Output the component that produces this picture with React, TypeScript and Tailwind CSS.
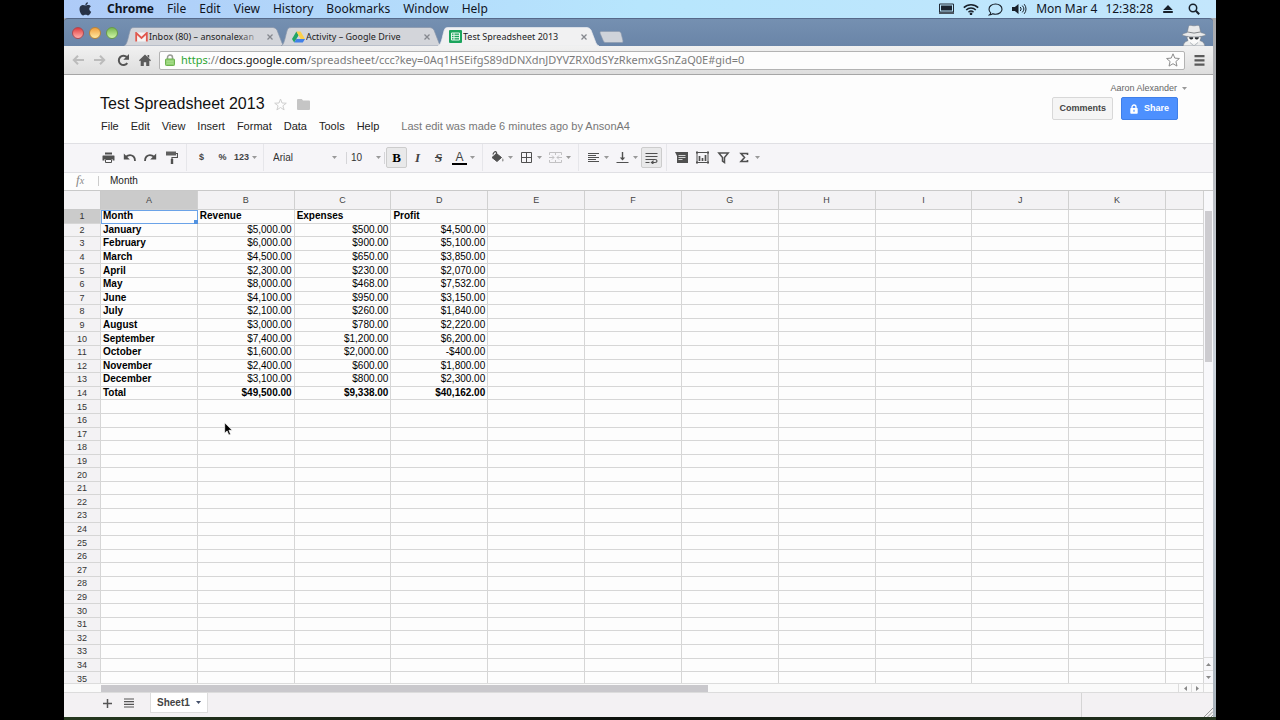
import type { ReactNode } from 'react';

type Row = [string, string, string, string];

const COLUMNS = ['A', 'B', 'C', 'D', 'E', 'F', 'G', 'H', 'I', 'J', 'K'];

const ROWS: Row[] = [
  ['Month', 'Revenue', 'Expenses', 'Profit'],
  ['January', '$5,000.00', '$500.00', '$4,500.00'],
  ['February', '$6,000.00', '$900.00', '$5,100.00'],
  ['March', '$4,500.00', '$650.00', '$3,850.00'],
  ['April', '$2,300.00', '$230.00', '$2,070.00'],
  ['May', '$8,000.00', '$468.00', '$7,532.00'],
  ['June', '$4,100.00', '$950.00', '$3,150.00'],
  ['July', '$2,100.00', '$260.00', '$1,840.00'],
  ['August', '$3,000.00', '$780.00', '$2,220.00'],
  ['September', '$7,400.00', '$1,200.00', '$6,200.00'],
  ['October', '$1,600.00', '$2,000.00', '-$400.00'],
  ['November', '$2,400.00', '$600.00', '$1,800.00'],
  ['December', '$3,100.00', '$800.00', '$2,300.00'],
  ['Total', '$49,500.00', '$9,338.00', '$40,162.00'],
];

const ROW_COUNT = 35;
const MAC_MENUS = ['File', 'Edit', 'View', 'History', 'Bookmarks', 'Window', 'Help'];
const DOC_MENUS = ['File', 'Edit', 'View', 'Insert', 'Format', 'Data', 'Tools', 'Help'];

function Caret({ className = 'text-[#999]' }: { className?: string }) {
  return (
    <svg viewBox="0 0 5 3" className={`h-[3px] w-[5px] shrink-0 ${className}`} fill="currentColor">
      <path d="M0 0h5L2.5 3z" />
    </svg>
  );
}

function MacMenuBar() {
  return (
    <header className="flex h-[18px] shrink-0 items-center bg-gradient-to-r from-[#aecbf8] via-[#b7e6fd] to-[#c3e6fc] pr-4 pl-[15px] font-['Noto_Sans',sans-serif] text-xs leading-4 text-[#10151f]">
      <svg viewBox="0 0 13 14" className="mr-[15px] h-[14px] w-[13px]" fill="#273246">
        <path d="M6.4 3.6c-.8 0-1.7-.6-2.8-.5C1.700 3.300.5 4.800.5 7c0 2.900 1.900 6.400 3.600 6.400.9 0 1.300-.6 2.500-.6s1.500.6 2.400.6c1.500 0 2.700-2.300 3.200-3.700-1.300-.6-1.900-1.500-1.900-2.700 0-1.100.6-2 1.600-2.600-.7-.9-1.600-1.400-2.700-1.400-1.200 0-2 .6-2.800.6zM8.900.3C7.300.5 6.200 1.800 6.300 3.200 7.800 3.200 9 1.900 8.900.3z" />
      </svg>
      <button className="mr-[13px] font-bold">Chrome</button>
      <nav className="flex gap-[13px]">
        {MAC_MENUS.map(m => <button key={m}>{m}</button>)}
      </nav>
      <div className="ml-auto flex items-center gap-[9px]">
        <svg viewBox="0 0 15 12" className="h-3 w-[15px]">
          <path d="M.5 1h14v8H.5z" fill="none" stroke="#222c38" />
          <path d="M2 2.500h11v5H2z" fill="#1b2430" />
          <path d="M0 9h15v2H0z" fill="#4a5560" />
        </svg>
        <svg viewBox="0 0 16 12" className="h-3 w-4" fill="none" stroke="#18202a" strokeWidth="1.5">
          <path d="M.8 4.600a10.300 10.300 0 0 1 14.400 0M3.200 7a6.800 6.800 0 0 1 9.600 0M5.500 9.200a3.600 3.600 0 0 1 5 0" />
          <circle cx="8" cy="10.800" r=".6" />
        </svg>
        <svg viewBox="0 0 15 13" className="h-[13px] w-[15px]" fill="none" stroke="#18202a" strokeWidth="1.100">
          <path d="M2.700 9.800C1.600 8.800 1 7.600 1 6.200 1 3.300 3.900 1 7.600 1S14 3.300 14 6.200s-2.900 5-6.400 5c-1 0-1.900-.1-2.700-.5-.8.8-2.200 1.300-3.600 1.300 1-.6 1.400-1.400 1.400-2.200z" />
        </svg>
        <svg viewBox="0 0 15 12" className="h-3 w-[15px]">
          <path d="M0 4h2.800L6.500 1v10L2.800 8H0z" fill="#18202a" />
          <path d="M8.300 4a3 3 0 0 1 0 4M10.300 2.600a5 5 0 0 1 0 6.800M12.200 1.200a7.300 7.300 0 0 1 0 9.600" fill="none" stroke="#18202a" />
        </svg>
        <span className="flex gap-2 whitespace-nowrap"><span>Mon Mar 4</span><span>12:38:28</span></span>
        <svg viewBox="0 0 10 8" className="ml-[1px] h-2 w-[10px]" fill="#18202a">
          <path d="M5 0l4.800 5H.2zM.2 6h9.600v2H.2z" />
        </svg>
        <button aria-label="Spotlight" className="ml-[6px]">
          <svg viewBox="0 0 12 12" className="h-3 w-3" fill="none" stroke="#18202a" strokeWidth="1.500">
            <circle cx="5" cy="5" r="3.700" />
            <path d="M7.800 7.800l3.400 3.400" strokeWidth="2" />
          </svg>
        </button>
      </div>
    </header>
  );
}

function BrowserTab({ title, icon, active, fade }: { title: string; icon: ReactNode; active?: boolean; fade?: boolean }) {
  return (
    <div role="tab" aria-selected={!!active} className={`relative -mr-1 flex h-[19px] w-[161px] items-center pr-3 pl-[11px] ${active ? 'z-10' : ''}`}>
      <svg viewBox="0 0 161 19" preserveAspectRatio="none" className="absolute inset-0 h-full w-full">
        <path
          d="M0 19C4 18 5 4 7 1.500Q8 .5 10 .5H149Q151.500.5 153 3L158 16Q159 18.500 161 19z"
          fill={active ? '#f1f1f2' : '#d3d5da'}
          stroke={active ? '#e9ebef' : '#8795ab'}
          strokeWidth=".7"
        />
      </svg>
      <span className="relative flex shrink-0">{icon}</span>
      <span className="relative ml-px flex-1 overflow-hidden whitespace-nowrap text-[9px] leading-3 text-[#1c1c1c]">
        {title}
        {fade && <span className="absolute inset-y-0 right-0 w-6 bg-gradient-to-r from-transparent to-[#d3d5da]" />}
      </span>
      <button aria-label={`Close ${title}`} className="relative ml-[5px]">
        <svg viewBox="0 0 6 6" className="h-[6px] w-[6px]" stroke="#85888e" strokeWidth="1.300">
          <path d="M.5.5l5 5M5.500.5l-5 5" />
        </svg>
      </button>
    </div>
  );
}

function GmailIcon() {
  return (
    <svg viewBox="0 0 13 10" className="h-[10px] w-[13px]">
      <path d="M1 .5h11v9H1z" fill="#f6f3f2" />
      <path d="M1.200 9.500V1l5.300 5 5.300-5v8.500" fill="none" stroke="#e0584e" strokeWidth="1.800" />
    </svg>
  );
}

function DriveIcon() {
  return (
    <svg viewBox="0 0 13 12" className="h-3 w-[13px]">
      <path d="M4.400.5L0 8l2.200 3.500 4.400-7.300z" fill="#23a566" />
      <path d="M4.400.5h4.200L13 8H8.700z" fill="#fcd04a" />
      <path d="M4.400 8H13l-2.200 3.500H2.200z" fill="#4180e8" />
    </svg>
  );
}

function SheetsIcon() {
  return (
    <svg viewBox="0 0 13 13" className="h-[13px] w-[13px]">
      <rect width="13" height="13" rx="1" fill="#1ba45c" />
      <path d="M2.500 3h8v7h-8zM2.500 5.300h8M2.500 7.700h8M5 3v7" fill="none" stroke="#e8f8ee" />
    </svg>
  );
}

function TabStrip() {
  return (
    <div className="flex h-7 shrink-0 items-end rounded-t border-t border-[#56698a] bg-gradient-to-b from-[#7590b1] to-[#6a85a8] font-['Noto_Sans',sans-serif]">
      <div className="mr-1 flex gap-[5px] self-center pl-2">
        <span className="h-3 w-3 rounded-full border border-[#a94a52] bg-gradient-to-b from-[#dd3640] to-[#ffaeac]" />
        <span className="h-3 w-3 rounded-full border border-[#b98338] bg-gradient-to-b from-[#f0a03a] to-[#ffe9a0]" />
        <span className="h-3 w-3 rounded-full border border-[#689a48] bg-gradient-to-b from-[#78b850] to-[#d0f6a6]" />
      </div>
      <div role="tablist" className="ml-[2px] flex">
        <BrowserTab title="Inbox (80) – ansonalexan" icon={<GmailIcon />} fade />
        <BrowserTab title="Activity – Google Drive" icon={<DriveIcon />} />
        <BrowserTab title="Test Spreadsheet 2013" icon={<SheetsIcon />} active />
      </div>
      <button aria-label="New tab" className="mb-[3px] ml-1">
        <svg viewBox="0 0 25 12" className="h-3 w-[25px]">
          <path d="M2 .5h18q1.500 0 2 1.500l2 8q.3 1.500-1.200 1.500H6.500Q5 11.500 4.400 10L1 2Q.6.5 2 .5z" fill="#cfd3da" stroke="#8b98ac" strokeWidth=".6" />
        </svg>
      </button>
      <svg viewBox="0 0 26 22" className="mr-[6px] ml-auto h-[22px] w-[26px]">
        <path d="M2 22q.5-4.500 5-5.500L5.500 13h15l-1.500 3.500q4.500 1 5 5.500z" fill="#eceded" stroke="#66717f" strokeWidth=".6" />
        <path d="M7.500 11.500h11v4.500q-1.500 3.500-5.500 3.500T7.500 16z" fill="#fafafa" />
        <path d="M7.500 2.500q1-1.700 3-1 2.500.7 5 0 2-.7 3 1l1.200 6Q24 9.300 25 11q-3 1.800-12 1.800T1 11q1-1.700 5.300-2.500z" fill="#e9eaeb" stroke="#717982" strokeWidth=".5" />
        <path d="M6.800 8q6.200 2.200 12.400 0" fill="none" stroke="#85888c" />
        <path d="M8 13.200h4.200v1.200q-1 1.300-2.400 1-1.600-.3-1.800-2.200zm5.800 0H18q-.2 1.900-1.800 2.200-1.400.3-2.400-1z" fill="#292d33" />
        <path d="M9 18.500l4 3.500 4-3.500" fill="none" stroke="#b1b6bb" />
      </svg>
    </div>
  );
}

function AddressBar() {
  return (
    <div className="flex h-[29px] shrink-0 items-center border-b border-[#a6a6a6] bg-gradient-to-b from-[#f1f1f1] to-[#dedede] pr-2 pl-2">
      <button aria-label="Back" className="mr-[10px]">
        <svg viewBox="0 0 12 10" className="h-[10px] w-3" fill="none" stroke="#bcbcbc" strokeWidth="2"><path d="M12 5H1.500M6 .8L1.800 5 6 9.200" /></svg>
      </button>
      <button aria-label="Forward" className="mr-[11px]">
        <svg viewBox="0 0 12 10" className="h-[10px] w-3" fill="none" stroke="#bcbcbc" strokeWidth="2"><path d="M0 5h10.500M6 .8L10.200 5 6 9.200" /></svg>
      </button>
      <button aria-label="Reload" className="mr-[9px]">
        <svg viewBox="0 0 13 13" className="h-[13px] w-[13px]">
          <path d="M10.300 9.200A4.700 4.700 0 1 1 9.800 3" fill="none" stroke="#555" strokeWidth="2" />
          <path d="M12 0v5.800H6.300z" fill="#555" />
        </svg>
      </button>
      <button aria-label="Home" className="mr-2">
        <svg viewBox="0 0 12 12" className="h-3 w-3" fill="#5b5b5b">
          <path d="M6 .5l6 5.800-.9.900L10.300 6.500V12H7.200V8.200H4.800V12H1.700V6.500l-.8.700L0 6.300zM8.500 1h1.700v3L8.500 2.400z" />
        </svg>
      </button>
      <div className="flex h-[19px] min-w-0 flex-1 items-center rounded-xs border border-[#b3b3b3] bg-[#fdfdfd] pr-1 pl-[5px]">
        <svg viewBox="0 0 10 12" className="mr-[6px] h-3 w-[10px] shrink-0">
          <path d="M2.500 6V3.500a2.500 2.500 0 0 1 5 0V6" fill="none" stroke="#989c94" strokeWidth="1.500" />
          <rect x=".5" y="5" width="9" height="6.500" rx=".8" fill="#8fd070" stroke="#6db150" />
          <path d="M1.500 7.200h7M1.500 9.200h7" stroke="#b5e39c" strokeWidth=".8" />
        </svg>
        <div
          role="textbox"
          aria-label="Address"
          contentEditable
          suppressContentEditableWarning
          className="min-w-0 flex-1 overflow-hidden font-['Noto_Sans',sans-serif] text-[11px] leading-4 whitespace-nowrap text-[#7b7b7b]"
        >
          <span className="text-[#2da531]">https</span>://<span className="text-[#141414]">docs.google.com</span>/spreadsheet/ccc?key=0Aq1HSEifgS89dDNXdnJDYVZRX0dSYzRkemxGSnZaQ0E#gid=0
        </div>
        <button aria-label="Bookmark">
          <svg viewBox="0 0 14 14" className="h-[14px] w-[14px]" fill="none" stroke="#8c8c8c" strokeLinejoin="round">
            <path d="M7 .8l1.800 4.300 4.600.4-3.500 3 1.100 4.600L7 10.700l-4 2.400 1.100-4.600-3.500-3 4.600-.4z" />
          </svg>
        </button>
      </div>
      <button aria-label="Chrome menu" className="ml-[9px]">
        <svg viewBox="0 0 11 11" className="h-[11px] w-[11px]" fill="#5a5a5a"><path d="M.5 0h10v2.200H.5zM.5 4.300h10v2.200H.5zM.5 8.600h10v2.200H.5z" /></svg>
      </button>
    </div>
  );
}

function DocHeader() {
  return (
    <div className="flex h-[68px] shrink-0 justify-between bg-[#fdfdfd] pl-9">
      <div className="pt-[19px]">
        <div className="flex items-center">
          <h1 className="text-base leading-5 text-[#111]">Test Spreadsheet 2013</h1>
          <button aria-label="Star" className="ml-[9px]">
            <svg viewBox="0 0 13 13" className="h-[13px] w-[13px]" fill="none" stroke="#cfcfcf" strokeLinejoin="round">
              <path d="M6.500 1l1.500 4 4.300.2-3.400 2.600 1.200 4.100-3.600-2.400-3.600 2.400 1.200-4.100L.7 5.200 5 5z" />
            </svg>
          </button>
          <button aria-label="Move to folder" className="ml-[10px]">
            <svg viewBox="0 0 13 11" className="h-[11px] w-[13px]" fill="#c5c5c5"><path d="M0 1q0-1 1-1h3.800l1.200 1.500h6q1 0 1 1V10q0 1-1 1H1q-1 0-1-1z" /></svg>
          </button>
        </div>
        <div className="mt-1 flex items-center gap-3 pl-px text-[11px] leading-4 text-[#222]">
          {DOC_MENUS.map(m => <button key={m}>{m}</button>)}
          <span className="ml-[10px] text-[#777]">Last edit was made 6 minutes ago by AnsonA4</span>
        </div>
      </div>
      <div className="flex flex-col items-end pt-[7px] pr-[26px]">
        <button className="flex items-center gap-[5px] text-[9px] leading-3 text-[#666]">Aaron Alexander <Caret /></button>
        <div className="mt-[3px] mr-[9px] flex gap-2 text-[9px] font-bold">
          <button className="h-[23px] rounded-xs border border-[#d8d8d8] bg-[#f5f5f5] px-[6px] text-[#444]">Comments</button>
          <button className="flex h-[23px] items-center gap-[6px] rounded-xs border border-[#3f7fe8] bg-[#4d90fe] px-2 text-white">
            <svg viewBox="0 0 8 10" className="h-[10px] w-2">
              <path d="M2 5V3a2 2 0 0 1 4 0v2" fill="none" stroke="#fff" strokeWidth="1.300" />
              <rect x=".3" y="4" width="7.400" height="5.700" rx=".7" fill="#fff" />
              <path d="M4 5.800v2" stroke="#4d90fe" strokeWidth="1.200" />
            </svg>
            Share
          </button>
        </div>
      </div>
    </div>
  );
}

interface ToolProps {
  label: string;
  children: ReactNode;
  pressed?: boolean;
  menu?: boolean;
}

function Tool({ label, children, pressed, menu }: ToolProps) {
  return (
    <button
      aria-label={label}
      className={`flex h-[21px] shrink-0 items-center rounded-xs text-[9px] font-bold text-[#444] ${menu ? 'w-[29px] gap-1 pl-1' : 'w-[21px] justify-center'} ${pressed ? 'border border-[#ccc] bg-[#e9e9ea]' : ''}`}
    >
      {children}
      {menu && <Caret />}
    </button>
  );
}

function Glyph({ children, faded }: { children: ReactNode; faded?: boolean }) {
  return (
    <svg viewBox="0 0 13 13" className={`h-[13px] w-[13px] shrink-0 ${faded ? 'opacity-30' : ''}`} fill="none" stroke="#505050">
      {children}
    </svg>
  );
}

function Divider() {
  return <div className="mx-1 h-full w-px shrink-0 bg-[#e6e6ea]" />;
}

function Toolbar() {
  return (
    <div role="toolbar" className="flex h-[30px] shrink-0 items-center border-y border-[#e0e0e4] bg-[#f6f5f8] pb-px pl-[34px]">
      <Tool label="Print">
        <Glyph>
          <path d="M3 1.500h7v2H3zM1 4.500h11q.5 0 .5.500v4.500H10.500V8h-8v1.500H.5V5q0-.5.500-.5z" fill="#505050" stroke="none" />
          <path d="M3.500 8.500h6v3h-6z" />
        </Glyph>
      </Tool>
      <Tool label="Undo">
        <Glyph><path d="M2.500 6Q7 2.500 10.500 5.500 12 7 12 10" strokeWidth="1.800" /><path d="M.8 2.500v6h6z" fill="#505050" stroke="none" /></Glyph>
      </Tool>
      <Tool label="Redo">
        <Glyph><path d="M10.500 6Q6 2.500 2.500 5.500 1 7 1 10" strokeWidth="1.800" /><path d="M12.200 2.500v6h-6z" fill="#505050" stroke="none" /></Glyph>
      </Tool>
      <Tool label="Paint format">
        <Glyph><path d="M1 .5h10v4H1z" fill="#606060" stroke="none" /><path d="M11 2.500h1.500v4H7V8" strokeWidth="1.200" /><path d="M7 8v5" strokeWidth="2.400" /></Glyph>
      </Tool>
      <Divider />
      <Tool label="Currency">$</Tool>
      <Tool label="Percent">%</Tool>
      <button className="flex h-[21px] w-[26px] shrink-0 items-center gap-[3px] pl-px text-[9px] font-bold text-[#444]">123 <Caret /></button>
      <Divider />
      <div className="relative flex w-[75px] shrink-0 items-center">
        <select aria-label="Font" className="w-full appearance-none bg-transparent pl-[5px] text-[10px] leading-4 text-[#333]"><option>Arial</option></select>
        <span className="pointer-events-none absolute right-[6px]"><Caret /></span>
      </div>
      <div className="mx-[3px] h-3 w-px shrink-0 bg-[#d5d5d8]" />
      <div className="relative flex w-[34px] shrink-0 items-center">
        <select aria-label="Font size" className="w-full appearance-none bg-transparent pl-px text-[10px] leading-4 text-[#333]"><option>10</option></select>
        <span className="pointer-events-none absolute right-[3px]"><Caret /></span>
      </div>
      <div className="mr-px h-3 w-px shrink-0 bg-[#d5d5d8]" />
      <Tool label="Bold" pressed><span className="font-['Liberation_Serif',serif] text-[13px] text-black">B</span></Tool>
      <Tool label="Italic"><span className="font-['Liberation_Serif',serif] text-[13px] italic">I</span></Tool>
      <Tool label="Strikethrough"><span className="font-['Liberation_Serif',serif] text-[13px] italic line-through">S</span></Tool>
      <Tool label="Text color" menu>
        <span className="-mx-px flex w-[15px] shrink-0 flex-col items-center border-b-2 border-black text-[12px] leading-3 font-normal">A</span>
      </Tool>
      <Divider />
      <Tool label="Fill color" menu>
        <Glyph><path d="M5.500 2.500l5 4-4.500 4L1 6.500z" fill="#505050" /><path d="M1.800 3.500Q4-1 5.500 1.500v3" strokeWidth="1.200" /><path d="M11.800 7q1.700 2.500 0 3.800-1.700-1.300 0-3.800z" fill="#999" stroke="none" /></Glyph>
      </Tool>
      <Tool label="Borders" menu><Glyph><path d="M1.500 1.500h10v10h-10zM6.500 1.500v10M1.500 6.500h10" /></Glyph></Tool>
      <Tool label="Merge cells" menu>
        <Glyph faded><path d="M.5 4V1.500h12V4M.5 9v2.500h12V9M6.500 1.500V4M6.500 9v2.500M0 6.500h5M3 4.500l2 2-2 2M13 6.500H8M10 4.500l-2 2 2 2" /></Glyph>
      </Tool>
      <Divider />
      <Tool label="Horizontal align" menu><Glyph><path d="M1 2.500h11M1 4.500h8M1 6.500h11M1 8.500h8M1 10.500h11" /></Glyph></Tool>
      <Tool label="Vertical align" menu><Glyph><path d="M6.500 1v7" strokeWidth="1.400" /><path d="M3.800 6.500h5.400L6.500 9.500z" fill="#505050" stroke="none" /><path d="M.5 11.500h12" /></Glyph></Tool>
      <Tool label="Wrap text" pressed>
        <Glyph><path d="M.5 2.500h12M.5 5.500h12M.5 8.500h9.500q2 0 2 1.500t-2 1.500H7M.5 11.500h4" strokeWidth="1.200" /><path d="M8.500 9v4.800L5.500 11.500z" fill="#505050" stroke="none" /></Glyph>
      </Tool>
      <Divider />
      <Tool label="Insert comment">
        <Glyph><path d="M0 1h13v11H2V5z" fill="#505050" stroke="none" /><path d="M3.500 4.500h7M3.500 6.500h7M3.500 8.500h4" stroke="#d5d5d5" /></Glyph>
      </Tool>
      <Tool label="Insert chart">
        <Glyph><path d="M1 1.500h11v10H1z" /><path d="M3.500 5v5M6.500 7v3M9.500 4v6" strokeWidth="1.700" /><path d="M0 .5h2v2H0zM11 .5h2v2h-2zM0 10.500h2v2H0zM11 10.500h2v2h-2z" fill="#505050" stroke="none" /></Glyph>
      </Tool>
      <Tool label="Filter"><Glyph><path d="M1.800 2h9.400L7.500 6.500v5l-2-1.500V6.500z" strokeWidth="1.500" /></Glyph></Tool>
      <Tool label="Functions" menu><Glyph><path d="M9.500 4V2.500H3l3.500 4L3 10.500h6.500V9" strokeWidth="1.600" /></Glyph></Tool>
    </div>
  );
}

function FormulaBar() {
  return (
    <div className="flex h-[17px] shrink-0 items-center bg-[#fdfdfd] pb-[2px] pl-3">
      <span className="w-[22px] font-['Liberation_Serif',serif] text-[13px] leading-4 text-[#888] italic">f<span className="text-[10px]">x</span></span>
      <div className="h-[10px] border-l border-[#ccc]" />
      <input aria-label="Formula" defaultValue="Month" className="min-w-0 flex-1 bg-transparent pl-[11px] text-[10px] leading-4 text-[#222] outline-none" />
    </div>
  );
}

function Cell({ row, col }: { row: number; col: number }) {
  const text = ROWS[row]?.[col] ?? '';
  const bold = row === 0 || col === 0 || row === ROWS.length - 1;
  const selected = row === 0 && col === 0;
  return (
    <td
      className={`border-r border-b border-[#d6d6d6] px-[2px] py-0 text-black ${bold ? 'font-bold' : ''} ${row > 0 && col > 0 ? 'text-right' : ''} ${selected ? 'relative outline -outline-offset-1 outline-[#6ba3e8]' : 'overflow-hidden'}`}
    >
      {text}
      {selected && <span className="absolute -right-px -bottom-px h-1 w-1 bg-[#5292e0]" />}
    </td>
  );
}

function Grid() {
  return (
    <div className="flex min-h-0 flex-1 border-t border-[#c9c9c9]">
      <div className="min-w-0 flex-1 overflow-hidden bg-[#fdfdfd]">
        <table className="h-[495px] w-full table-fixed border-separate border-spacing-0 text-[10px] leading-3">
          <colgroup>
            <col className="w-[37px]" />
            {COLUMNS.map(c => <col key={c} />)}
            <col className="w-[38px]" />
          </colgroup>
          <thead>
            <tr className="h-[19px] bg-[#f3f2f4] text-[9px] text-[#444]">
              <th className="border-r border-b border-[#c9c9c9]" />
              {COLUMNS.map(c => (
                <th key={c} className={`border-r border-b border-[#d0d0d0] p-0 font-normal ${c === 'A' ? 'bg-[#cbcbcb]' : ''}`}>{c}</th>
              ))}
              <th className="border-r border-b border-[#d0d0d0]" />
            </tr>
          </thead>
          <tbody>
            {Array.from({ length: ROW_COUNT }, (_, row) => (
              <tr key={row}>
                <th className={`border-r border-b border-[#d6d6d6] p-0 text-[9px] font-normal text-[#333] ${row === 0 ? 'bg-[#cbcbcb]' : 'bg-[#f3f2f4]'}`}>{row + 1}</th>
                {COLUMNS.map((c, col) => <Cell key={c} row={row} col={col} />)}
                <td className="border-r border-b border-[#d6d6d6] p-0" />
              </tr>
            ))}
          </tbody>
        </table>
      </div>
      <div className="flex w-[9px] shrink-0 flex-col bg-[#f8f8fb] pt-[20px]">
        <div className="ml-px h-[32%] w-[7px] bg-[#cdccd0]" />
        <button aria-label="Scroll up" className="mt-auto flex h-[13px] items-center justify-center border-t border-[#ddd] text-[#888]">
          <Caret className="rotate-180" />
        </button>
        <button aria-label="Scroll down" className="flex h-[13px] items-center justify-center border-t border-[#ddd] text-[#888]">
          <Caret className="" />
        </button>
      </div>
    </div>
  );
}

function HorizontalScroll() {
  return (
    <div className="flex h-[10px] shrink-0 items-center border-y border-[#dcdcdc] bg-[#fafafa] pr-[9px] pl-[37px]">
      <div className="h-[7px] w-[55%] bg-[#c9c8cc]" />
      <button aria-label="Scroll left" className="ml-auto flex h-full w-[13px] items-center justify-center border-l border-[#ddd] text-[#888]">
        <Caret className="rotate-90" />
      </button>
      <button aria-label="Scroll right" className="flex h-full w-[13px] items-center justify-center border-x border-[#ddd] text-[#888]">
        <Caret className="-rotate-90" />
      </button>
    </div>
  );
}

function SheetBar() {
  return (
    <footer className="flex h-6 shrink-0 bg-[#f3f1f3] pl-[39px]">
      <div className="mr-4 flex items-center gap-3 pb-1">
        <button aria-label="Add sheet">
          <svg viewBox="0 0 9 9" className="h-[9px] w-[9px]" stroke="#555" strokeWidth="1.500"><path d="M4.500 0v9M0 4.500h9" /></svg>
        </button>
        <button aria-label="All sheets">
          <svg viewBox="0 0 10 10" className="h-[10px] w-[10px]" stroke="#555" strokeWidth="1.200"><path d="M0 1h10M0 3.700h10M0 6.300h10M0 9h10" /></svg>
        </button>
      </div>
      <button className="flex h-5 items-center gap-[6px] border border-t-0 border-[#ddd] bg-white px-[6px] text-[10px] font-bold text-[#444]">
        Sheet1 <Caret className="text-[#44506a]" />
      </button>
      <div className="ml-auto flex w-[132px] items-end justify-end border-l border-[#d5d5d5]">
        <svg viewBox="0 0 9 9" className="h-[9px] w-[9px]" stroke="#999"><path d="M0 9l9-9M3.500 9L9 3.500M7 9l2-2" /></svg>
      </div>
    </footer>
  );
}

export default function App() {
  return (
    <div className="flex h-screen flex-col bg-black px-16 font-['Liberation_Sans',Arial,sans-serif]">
      <MacMenuBar />
      <div className="flex min-h-0 flex-1 bg-gradient-to-b from-[#a9aaad] via-[#ccd3db] to-[#a8b2bb] pr-[3px]">
        <main className="flex min-w-0 flex-1 flex-col">
          <TabStrip />
          <AddressBar />
          <DocHeader />
          <Toolbar />
          <FormulaBar />
          <Grid />
          <HorizontalScroll />
          <SheetBar />
        </main>
      </div>
      <div className="h-[3px] shrink-0 bg-gradient-to-r from-[#26391f] via-[#0c110c] to-[#23341e]" />
      <svg viewBox="0 0 9 14" className="pointer-events-none absolute top-[422px] left-[224px] h-[14px] w-[9px]">
        <path d="M.7.8v10.400l2.400-2.300 1.700 4.200 1.800-.8-1.700-4h3.300z" fill="#000" stroke="#fff" strokeWidth=".7" />
      </svg>
    </div>
  );
}
